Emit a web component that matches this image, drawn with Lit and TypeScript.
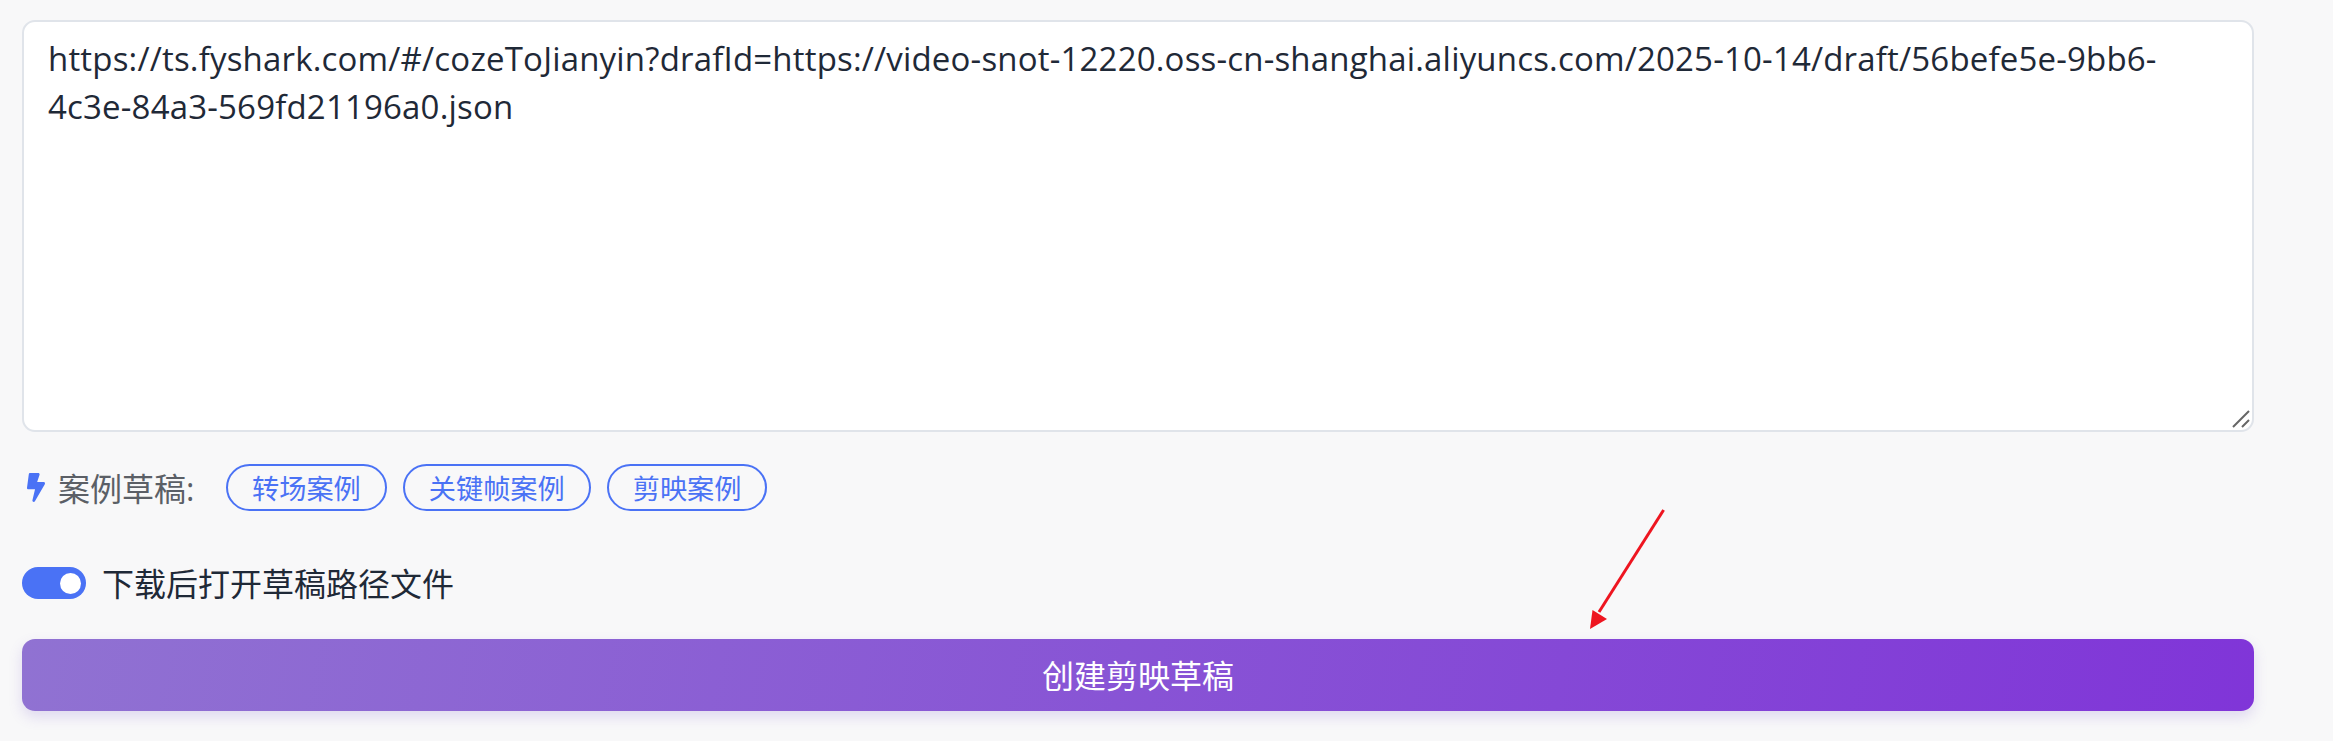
import { LitElement, html, css } from "lit";
import { customElement } from "lit/decorators.js";

const URL_TEXT =
  "https://ts.fyshark.com/#/cozeToJianyin?drafId=https://video-snot-12220.oss-cn-shanghai.aliyuncs.com/2025-10-14/draft/56befe5e-9bb6-4c3e-84a3-569fd21196a0.json";

@customElement("app-root")
export class AppRoot extends LitElement {
  static styles = css`
    :host {
      display: block;
      position: relative;
      width: 2333px;
      height: 741px;
      overflow: hidden;
      background: #f8f8f9;
      font-family: "Open Sans", "Noto Sans CJK SC", sans-serif;
      color: #1f2937;
    }
    .page {
      display: flex;
      flex-direction: column;
      width: 2232px;
      padding: 20px 0 0 22px;
    }
    .input {
      position: relative;
      box-sizing: border-box;
      height: 412px;
      padding: 13px 24px;
      background: #fff;
      border: 2px solid #e0e4ea;
      border-radius: 13px;
      font-size: 33px;
      line-height: 48px;
      letter-spacing: 0.18px;
      color: #1f2937;
      overflow-wrap: anywhere;
    }
    .grip {
      position: absolute;
      right: 1px;
      bottom: 1px;
      width: 19px;
      height: 19px;
    }
    .samples {
      display: flex;
      align-items: center;
      margin-top: 32px;
      height: 47px;
    }
    .bolt {
      width: 18px;
      height: 29px;
      margin-left: 5px;
      fill: #4a72f5;
      flex: none;
    }
    .samples-label {
      margin-left: 13px;
      padding-bottom: 1px;
      font-size: 32px;
      color: #5b5f66;
      width: 168px;
      flex: none;
      white-space: nowrap;
    }
    .chips {
      display: flex;
      gap: 16px;
    }
    .chip {
      box-sizing: border-box;
      height: 47px;
      padding: 0 24px 2px;
      display: flex;
      align-items: center;
      border: 2px solid #4a72f5;
      border-radius: 24px;
      font-size: 27.2px;
      color: #4a72f5;
      white-space: nowrap;
    }
    .option {
      display: flex;
      align-items: center;
      gap: 16px;
      margin-top: 56px;
      height: 32px;
    }
    .toggle {
      position: relative;
      width: 64px;
      height: 32px;
      border-radius: 16px;
      background: #4a72f5;
      flex: none;
    }
    .knob {
      position: absolute;
      top: 6px;
      right: 5px;
      width: 21px;
      height: 21px;
      border-radius: 50%;
      background: #fff;
    }
    .option-label {
      padding-bottom: 2px;
      font-size: 32px;
      color: #1f2937;
      white-space: nowrap;
    }
    .submit {
      box-sizing: border-box;
      margin-top: 40px;
      height: 72px;
      padding-bottom: 2px;
      display: flex;
      align-items: center;
      justify-content: center;
      border-radius: 13px;
      background: linear-gradient(100deg, #9072d2 0%, #8035d8 100%);
      box-shadow: 0 6px 14px rgba(110, 80, 200, 0.18);
      color: #fff;
      font-size: 32px;
    }
    .arrow {
      position: absolute;
      left: 1580px;
      top: 500px;
      width: 100px;
      height: 140px;
    }
  `;

  render() {
    return html`
      <div class="page">
        <div class="input">
          ${URL_TEXT}
          <svg class="grip" viewBox="0 0 19 19">
            <path d="M1 17 L17 1 M10 17 L17 10" stroke="#666" stroke-width="2" fill="none" />
          </svg>
        </div>
        <div class="samples">
          <svg class="bolt" viewBox="0 0 320 512">
            <path
              d="M296 160H180.6l42.6-129.8C227.2 15 215.7 0 200 0H56C44 0 33.8 8.9 32.2 20.8l-32 240C-2.7 275.2 8.5 288 24 288h118.7L96.6 482.5c-3.6 15.2 8 29.5 23.3 29.5 8.4 0 16.4-4.4 20.8-12l176-304c9.3-15.9-2.2-36-20.7-36z"
            />
          </svg>
          <span class="samples-label">案例草稿:</span>
          <div class="chips">
            <span class="chip">转场案例</span>
            <span class="chip">关键帧案例</span>
            <span class="chip">剪映案例</span>
          </div>
        </div>
        <div class="option">
          <span class="toggle"><span class="knob"></span></span>
          <span class="option-label">下载后打开草稿路径文件</span>
        </div>
        <div class="submit">创建剪映草稿</div>
      </div>
      <svg class="arrow" viewBox="0 0 100 140">
        <path d="M83.6 10 L19 112" stroke="#ee1520" stroke-width="3" fill="none" />
        <path d="M10 129 L12.5 110 L27 119 Z" fill="#ee1520" />
      </svg>
    `;
  }
}
